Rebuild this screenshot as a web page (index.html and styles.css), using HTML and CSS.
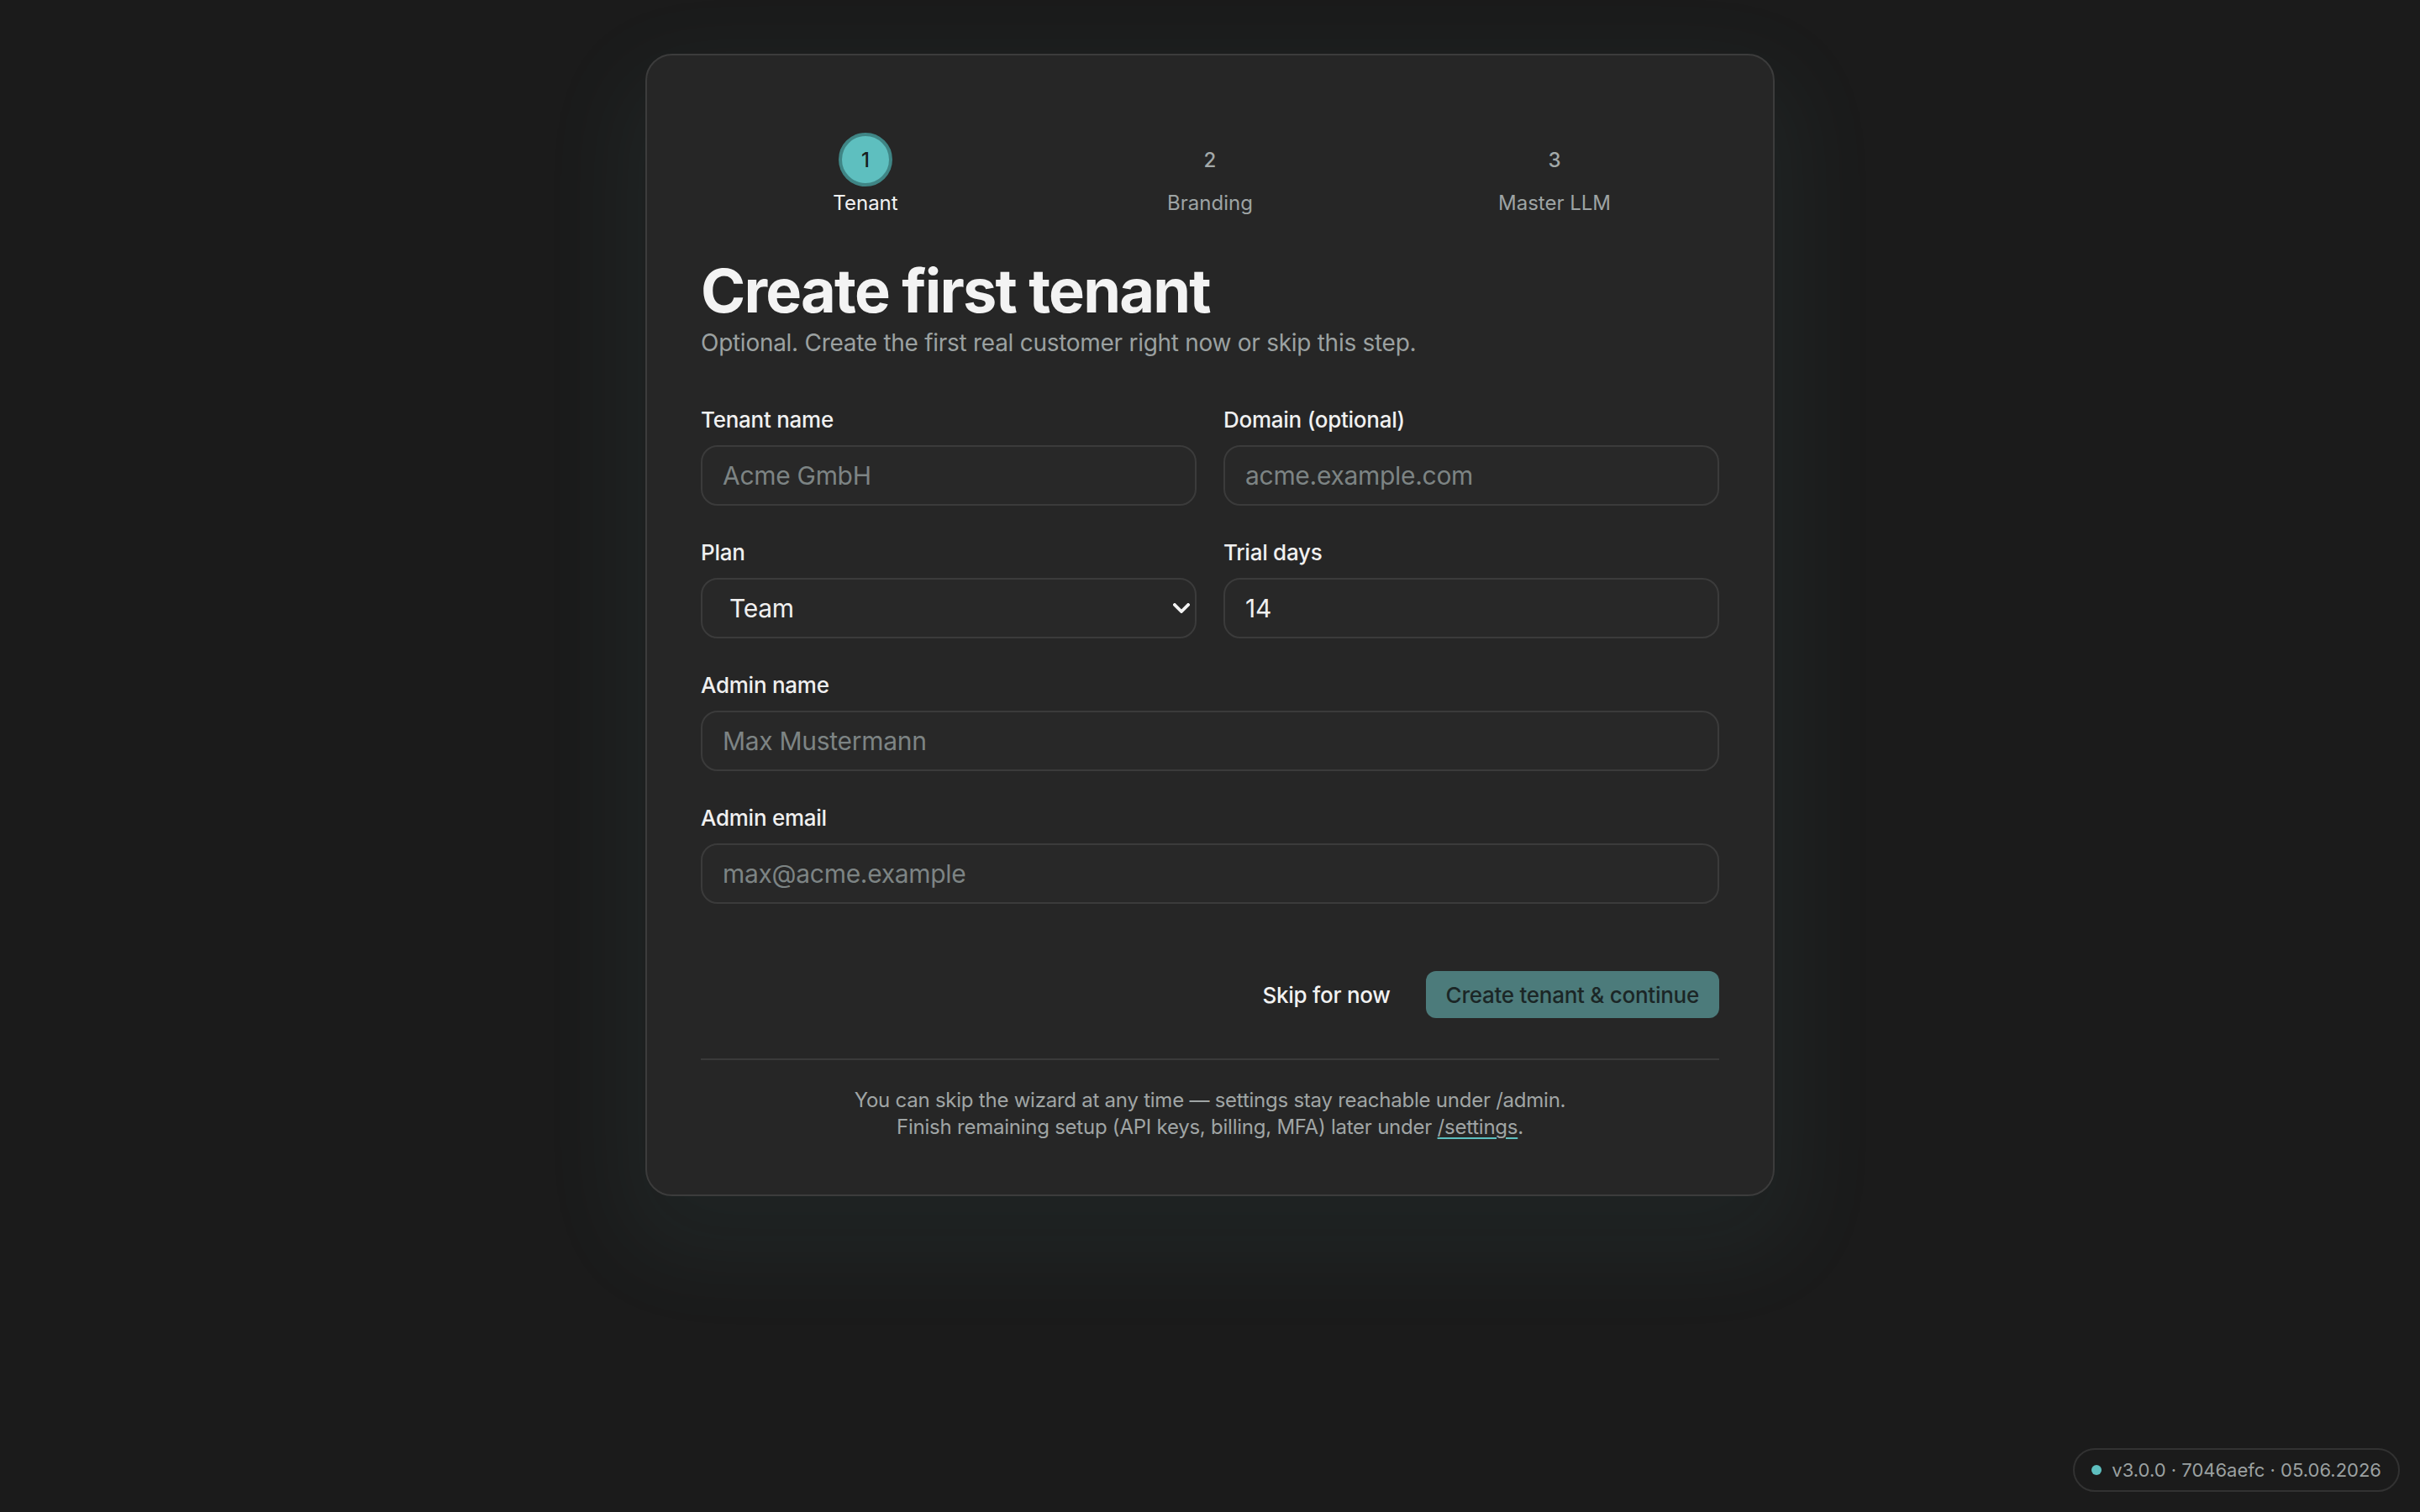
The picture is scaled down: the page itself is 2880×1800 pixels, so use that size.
FILE: index.html
```html
<!DOCTYPE html>
<html lang="en">
<head>
<meta charset="utf-8">
<title>Setup wizard – Create first tenant</title>
<link rel="stylesheet" href="styles.css">
</head>
<body>
<main class="page">
  <section class="card">
    <ol class="stepper">
      <li class="step is-active"><span class="step-dot">1</span><span class="step-label">Tenant</span></li>
      <li class="step"><span class="step-dot">2</span><span class="step-label">Branding</span></li>
      <li class="step"><span class="step-dot">3</span><span class="step-label">Master LLM</span></li>
    </ol>

    <h1 class="title">Create first tenant</h1>
    <p class="subtitle">Optional. Create the first real customer right now or skip this step.</p>

    <form class="form">
      <div class="fields">
        <div class="field">
          <label class="label" for="tname">Tenant name</label>
          <input class="input" id="tname" type="text" placeholder="Acme GmbH">
        </div>
        <div class="field">
          <label class="label" for="domain">Domain (optional)</label>
          <input class="input" id="domain" type="text" placeholder="acme.example.com">
        </div>
        <div class="field">
          <label class="label" for="plan">Plan</label>
          <div class="select-wrap">
            <select class="input select" id="plan">
              <option>Team</option>
              <option>Starter</option>
              <option>Enterprise</option>
            </select>
            <svg class="select-chevron" viewBox="0 0 10 6" width="10" height="6" aria-hidden="true">
              <path d="M1 1l4 4 4-4" fill="none" stroke="currentColor" stroke-width="1.9" stroke-linecap="square" stroke-linejoin="miter"/>
            </svg>
          </div>
        </div>
        <div class="field">
          <label class="label" for="trial">Trial days</label>
          <input class="input" id="trial" type="text" value="14">
        </div>
        <div class="field field-wide">
          <label class="label" for="aname">Admin name</label>
          <input class="input" id="aname" type="text" placeholder="Max Mustermann">
        </div>
        <div class="field field-wide">
          <label class="label" for="aemail">Admin email</label>
          <input class="input" id="aemail" type="email" placeholder="max@acme.example">
        </div>
      </div>

      <div class="actions">
        <button type="button" class="btn btn-ghost">Skip for now</button>
        <button type="submit" class="btn btn-primary">Create tenant &amp; continue</button>
      </div>
    </form>

    <hr class="divider">

    <p class="footnote">
      You can skip the wizard at any time — settings stay reachable under /admin.<br>
      Finish remaining setup (API keys, billing, MFA) later under <a class="link" href="#">/settings</a>.
    </p>
  </section>

  <div class="version"><span class="version-dot"></span>v3.0.0 · 7046aefc · 05.06.2026</div>
</main>
</body>
</html>
```

FILE: styles.css
```css
html {
  zoom: 2;
  color-scheme: dark;
}

body {
  margin: 0;
  min-height: 900px;
  background: #1b1b1b;
  color: #f2f2f2;
  font-family: Inter, "Noto Sans", "Liberation Sans", sans-serif;
  -webkit-font-smoothing: antialiased;
}

.page {
  padding-top: 32px;
}

.card {
  box-sizing: border-box;
  width: 672px;
  margin: 0 auto;
  padding: 32px;
  background: #262626;
  border: 1px solid #3c3c3c;
  border-radius: 16px;
  box-shadow: 0 22px 56px 14px rgba(95, 185, 185, 0.06);
}

/* Stepper */
.stepper {
  list-style: none;
  margin: 0;
  padding: 14px 0 0;
  display: grid;
  grid-template-columns: repeat(3, 205px);
  justify-content: center;
}

.step {
  display: flex;
  flex-direction: column;
  align-items: center;
}

.step-dot {
  box-sizing: border-box;
  width: 32px;
  height: 32px;
  border-radius: 50%;
  display: flex;
  align-items: center;
  justify-content: center;
  font-size: 12px;
  font-weight: 500;
  color: #a3a9a9;
}

.step.is-active .step-dot {
  background: #5ebfbf;
  border: 2px solid #3f8585;
  color: #162020;
}

.step-label {
  margin-top: 2px;
  font-size: 12px;
  line-height: 16px;
  color: #9ea4a4;
}

.step.is-active .step-label {
  color: #f2f2f2;
}

/* Heading */
.title {
  margin: 24px 0 0;
  font-size: 36px;
  line-height: 40px;
  font-weight: 700;
  letter-spacing: -0.025em;
  color: #f3f3f3;
}

.subtitle {
  margin: 1px 0 0;
  font-size: 14px;
  line-height: 20px;
  letter-spacing: -0.01em;
  color: #9ba1a1;
}

/* Form */
.form {
  margin-top: 26px;
}

.fields {
  display: grid;
  grid-template-columns: 1fr 1fr;
  column-gap: 16px;
  row-gap: 18px;
}

.field {
  display: flex;
  flex-direction: column;
  min-width: 0;
}

.field-wide {
  grid-column: 1 / -1;
}

.label {
  font-size: 13px;
  line-height: 20px;
  font-weight: 500;
  letter-spacing: -0.01em;
  color: #f0f0f0;
  margin-bottom: 5px;
}

.input {
  box-sizing: border-box;
  height: 36px;
  width: 100%;
  padding: 0 12px;
  background: #282828;
  border: 1px solid #3b3b3b;
  border-radius: 10px;
  color: #f0f0f0;
  font-family: inherit;
  font-size: 15px;
  letter-spacing: -0.01em;
  outline: none;
}

.input::placeholder {
  color: #7d8484;
}

.select-wrap {
  position: relative;
}

.select {
  -webkit-appearance: none;
  appearance: none;
  padding: 0 28px 0 16px;
}

.select-chevron {
  position: absolute;
  right: 4px;
  top: 50%;
  width: 10px;
  height: 6px;
  margin-top: -3px;
  color: #f4f4f4;
  pointer-events: none;
}

.actions {
  margin-top: 40px;
  display: flex;
  justify-content: flex-end;
  align-items: center;
  gap: 9px;
}

.btn {
  height: 28px;
  padding: 0 12px;
  border: 0;
  border-radius: 6px;
  font-family: inherit;
  font-size: 13px;
  font-weight: 500;
  letter-spacing: -0.01em;
  cursor: pointer;
}

.btn-ghost {
  background: transparent;
  color: #f2f2f2;
}

.btn-primary {
  background: #4c7b7b;
  color: #1b2626;
}

.divider {
  margin: 24px 0 0;
  border: 0;
  border-top: 1px solid #3a3a3a;
  height: 0;
}

.footnote {
  margin: 16px 0 0;
  text-align: center;
  font-size: 12px;
  line-height: 16px;
  letter-spacing: -0.01em;
  color: #a0a5a5;
}

.link {
  color: inherit;
  text-decoration: underline;
  text-decoration-color: #5ebfbf;
  text-underline-offset: 2px;
}

/* Version badge */
.version {
  position: fixed;
  right: 12px;
  bottom: 12px;
  display: flex;
  align-items: center;
  gap: 6px;
  height: 26px;
  box-sizing: border-box;
  padding: 0 10px;
  border: 1px solid #323232;
  border-radius: 999px;
  background: #1b1b1b;
  font-size: 11px;
  color: #9ba1a1;
}

.version-dot {
  width: 6px;
  height: 6px;
  border-radius: 50%;
  background: #5ebfbf;
}
```
